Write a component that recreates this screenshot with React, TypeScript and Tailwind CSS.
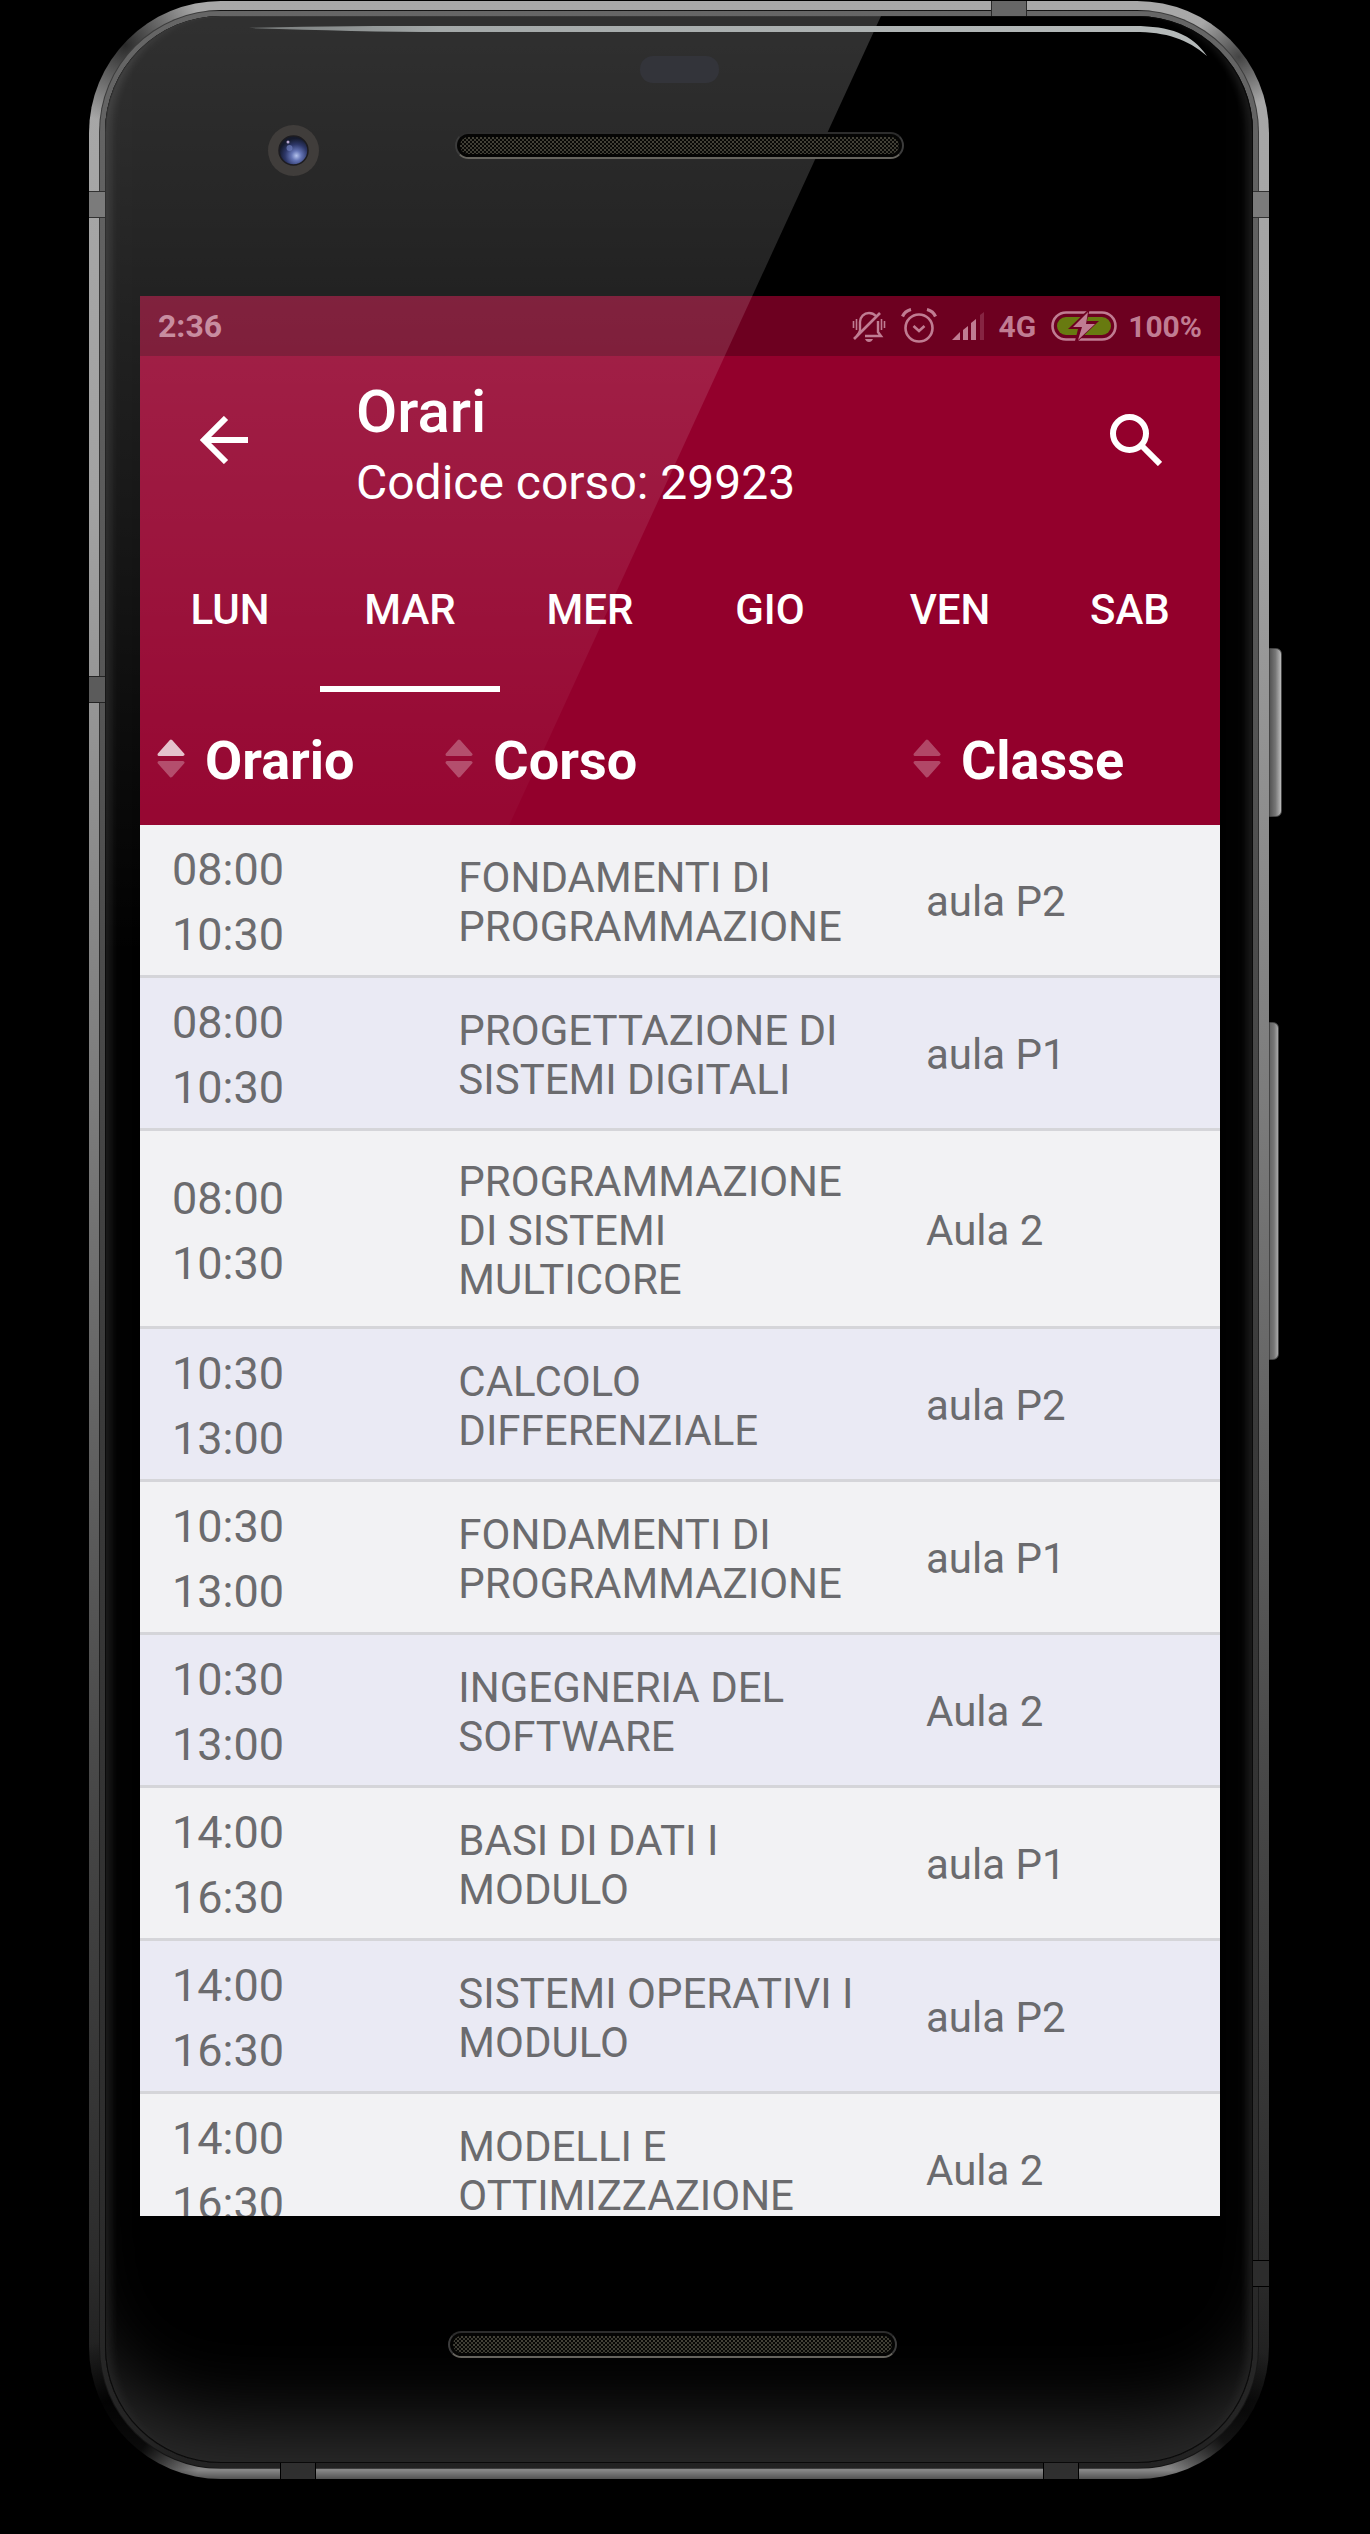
import React from "react";

const LESSONS = [
  { start: "08:00", end: "10:30", course: ["FONDAMENTI DI", "PROGRAMMAZIONE"], room: "aula P2" },
  { start: "08:00", end: "10:30", course: ["PROGETTAZIONE DI", "SISTEMI DIGITALI"], room: "aula P1" },
  { start: "08:00", end: "10:30", course: ["PROGRAMMAZIONE", "DI SISTEMI", "MULTICORE"], room: "Aula 2" },
  { start: "10:30", end: "13:00", course: ["CALCOLO", "DIFFERENZIALE"], room: "aula P2" },
  { start: "10:30", end: "13:00", course: ["FONDAMENTI DI", "PROGRAMMAZIONE"], room: "aula P1" },
  { start: "10:30", end: "13:00", course: ["INGEGNERIA DEL", "SOFTWARE"], room: "Aula 2" },
  { start: "14:00", end: "16:30", course: ["BASI DI DATI I", "MODULO"], room: "aula P1" },
  { start: "14:00", end: "16:30", course: ["SISTEMI OPERATIVI I", "MODULO"], room: "aula P2" },
  { start: "14:00", end: "16:30", course: ["MODELLI E", "OTTIMIZZAZIONE"], room: "Aula 2" },
];

const DAYS = ["LUN", "MAR", "MER", "GIO", "VEN", "SAB"];

function MutedBell() {
  return (
    <svg width="34" height="34" viewBox="0 0 34 34" fill="none" stroke="currentColor" strokeWidth="2.4">
      <path d="M8 23V13c0-5 4-9 9-9 3 0 5 1 7 3M26 12v11l3 4H13" />
      <path d="M8 22l-3 5" />
      <path d="M28 4 2 30" strokeWidth="2.6" />
      <path d="M13 30h8c-1 2-2 3-4 3s-3-1-4-3z" fill="currentColor" stroke="none" />
      <path d="M1.500 12v7M4.500 10v11M29.500 10v11M32.500 12v7" strokeWidth="1.600" />
    </svg>
  );
}

function AlarmClock() {
  return (
    <svg width="36" height="36" viewBox="0 0 36 36" fill="none" stroke="currentColor" strokeWidth="2.600">
      <circle cx="18" cy="20" r="13.500" />
      <path d="M12.500 18l5.500 5 5.500-5" />
      <path d="M1.500 8.500C3 5 6 2.500 10 1.500M34.500 8.500C33 5 30 2.500 26 1.500" strokeWidth="3.200" />
    </svg>
  );
}

function Signal() {
  return (
    <svg width="32" height="28" viewBox="0 0 32 28" fill="currentColor">
      <path d="M0 28l8-8v8zM11 18l5-4v14h-5zM19 11l5-4v21h-5z" />
      <path d="M28 3l4-3v28h-4z" opacity=".3" />
    </svg>
  );
}

function Battery() {
  return (
    <svg width="66" height="30" viewBox="0 0 66 30" fill="none">
      <rect x="1.500" y="1.500" width="63" height="27" rx="13.500" stroke="currentColor" strokeWidth="2.600" />
      <rect x="6" y="6" width="54" height="18" rx="9" fill="#687a10" />
      <path d="M39-3 17 18h10l-4 16 25-24H36z" fill="#6d0020" />
      <path d="M37 1 22 16h9l-4 13 17-16h-9z" fill="currentColor" />
    </svg>
  );
}

function SortIcon({ active }: { active?: boolean }) {
  return (
    <svg
      width="28"
      height="39"
      viewBox="0 0 28 39"
      fill="#fff"
      stroke="#fff"
      strokeWidth="3"
      strokeLinejoin="round"
      className="shrink-0"
    >
      <g opacity={active ? 0.75 : 0.28}>
        <path d="M14 2 26 15.500H2z" />
      </g>
      <g opacity=".28">
        <path d="M14 37 26 23.500H2z" />
      </g>
    </svg>
  );
}

function SpeakerGrille() {
  return (
    <div className="relative z-10 h-[27px] w-[449px] rounded-full border-2 border-x-[#3c3c3c] border-b-[#66645e] border-t-[#2c2c2c] bg-[#050504] p-[3px]">
      <svg width="100%" height="100%" className="rounded-full">
        <defs>
          <pattern id="mesh" width="4" height="4" patternUnits="userSpaceOnUse">
            <rect width="4" height="4" fill="#080806" />
            <rect x="0" y="0" width="2" height="2" fill="#444238" />
            <rect x="2" y="2" width="2" height="2" fill="#3d3c33" />
          </pattern>
        </defs>
        <rect width="100%" height="100%" fill="url(#mesh)" />
      </svg>
    </div>
  );
}

function Camera() {
  return (
    <svg width="51" height="51" viewBox="0 0 51 51">
      <defs>
        <radialGradient id="lens" cx=".6" cy=".68" r=".6">
          <stop offset="0" stopColor="#b4c2ec" />
          <stop offset=".28" stopColor="#6474b4" />
          <stop offset=".65" stopColor="#2d3768" />
          <stop offset="1" stopColor="#151a2c" />
        </radialGradient>
      </defs>
      <circle cx="25.500" cy="25.500" r="25.500" fill="#403d3b" />
      <circle cx="25.500" cy="25.500" r="14.500" fill="url(#lens)" stroke="#1d1c20" strokeWidth="1.500" />
      <circle cx="21.500" cy="23" r="3" fill="#6d7cba" opacity=".7" />
      <circle cx="20" cy="17" r="1.500" fill="#b9a7cf" />
    </svg>
  );
}

/* Light falling across the upper left of the glass. */
function GlassReflection() {
  return (
    <svg
      className="pointer-events-none absolute left-0 top-0 h-[940px] w-[800px]"
      viewBox="0 0 800 940"
      preserveAspectRatio="none"
      aria-hidden="true"
    >
      <defs>
        <linearGradient id="glare" x1="0" y1="0" x2="0" y2="1">
          <stop offset="0" stopColor="#fff" stopOpacity=".19" />
          <stop offset="1" stopColor="#fff" stopOpacity="0" />
        </linearGradient>
      </defs>
      <path d="M0 0h776L344 940H0z" fill="url(#glare)" />
    </svg>
  );
}

function EdgeHighlight() {
  return (
    <svg
      className="pointer-events-none absolute right-[62px] top-[24px] h-[34px] w-[958px]"
      viewBox="0 0 958 34"
      preserveAspectRatio="none"
      aria-hidden="true"
    >
      <defs>
        <linearGradient id="edge" x1="0" x2="1">
          <stop offset="0" stopColor="#777b7b" />
          <stop offset=".2" stopColor="#a3a8a8" />
          <stop offset="1" stopColor="#b5baba" />
        </linearGradient>
      </defs>
      <path d="M0 3C70 1 130 1 200 1h685c36 0 58 8 73 30-20-17-40-24-73-24H200C130 7 70 5 0 3z" fill="url(#edge)" />
    </svg>
  );
}

export default function App() {
  return (
    <main className="min-h-screen bg-black pb-[52px] pl-[89px] pr-[101px] pt-px font-[Roboto,sans-serif]">
      <div className="relative rounded-[132px] bg-[radial-gradient(circle_at_36px_44px,rgba(0,0,0,0.75),transparent_80px),radial-gradient(circle_at_calc(100%-30px)_56px,rgba(0,0,0,0.6),transparent_50px),radial-gradient(circle_at_30px_calc(100%-50px),rgba(0,0,0,0.9)_30px,transparent_90px),radial-gradient(circle_at_calc(100%-30px)_calc(100%-50px),rgba(0,0,0,0.8)_20px,transparent_80px),linear-gradient(180deg,#a8a8a8_0,#a2a2a2_500px,#7c7c7c_1100px,#4a4a4a_1750px,#2c2c2c_2260px,#1c1c1c_2400px,#888_2469px,#4c4c4c_2479px)] px-[10px] pb-[10px] pt-[9px]">
        <div className="rounded-[122px] border border-black/40 bg-[linear-gradient(180deg,#666_0,#555_700px,#3a3a3a_1400px,#2c2c2c_2200px,#222_2460px)] p-[5px]">
          <div className="relative overflow-hidden rounded-[116px] bg-black pl-[35px] pr-[33px] shadow-[inset_0_0_0_1px_#0a0a0a,inset_0_-90px_80px_-50px_#2c2c2c,inset_14px_0_8px_-8px_#1c1c1c,inset_-14px_0_8px_-8px_#1c1c1c]">
            <div className="relative flex h-[280px] justify-center pr-[2px] pt-[116px]">
              <SpeakerGrille />
              <div className="absolute left-[128px] top-[109px] z-10">
                <Camera />
              </div>
              <span className="absolute left-[500px] top-[40px] z-10 h-[27px] w-[79px] rounded-[13px] bg-[#33343a]" />
            </div>

            <div className="aspect-[9/16] overflow-hidden bg-[#f2f2f4]">
              <header className="bg-[#93002c] text-white">
                <div className="flex h-[60px] items-center justify-between bg-[#6d0020] px-[18px] font-bold text-[#c07c92]">
                  <span className="text-[32px]">2:36</span>
                  <div className="flex items-center gap-[15px] text-[30px]">
                    <MutedBell />
                    <AlarmClock />
                    <Signal />
                    <span>4G</span>
                    <Battery />
                    <span className="-ml-1">100%</span>
                  </div>
                </div>
                <div className="flex h-[168px] items-center pl-[60px] pr-[58px]">
                  <button aria-label="Indietro" className="w-[156px]">
                    <svg width="48" height="48" viewBox="0 0 48 48" fill="none" stroke="#fff" strokeWidth="6">
                      <path d="M48 24H5M26 2 4 24l22 22" />
                    </svg>
                  </button>
                  <div className="grow pt-[16px]">
                    <h1 className="text-[60px] font-medium leading-[70px]">Orari</h1>
                    <p className="text-[48px] leading-[72px]">Codice corso: 29923</p>
                  </div>
                  <button aria-label="Cerca">
                    <svg width="52" height="52" viewBox="0 0 52 52" fill="none" stroke="#fff" strokeWidth="6">
                      <circle cx="19.500" cy="19.500" r="16.500" />
                      <path d="M32 32l18 18" />
                    </svg>
                  </button>
                </div>
                <nav className="grid grid-cols-6 pt-[12px]">
                  {DAYS.map((day) => (
                    <button
                      key={day}
                      className={
                        day === "MAR"
                          ? "h-[156px] border-b-[6px] border-white pb-[4px] text-[42px] font-medium"
                          : "h-[156px] border-b-[6px] border-transparent pb-[4px] text-[42px] font-medium"
                      }
                    >
                      {day}
                    </button>
                  ))}
                </nav>
              </header>

              <table className="w-full table-fixed border-collapse text-left text-[#6b6b6e]">
                <colgroup>
                  <col className="w-[26.7%]" />
                  <col className="w-[43.3%]" />
                  <col className="w-[30%]" />
                </colgroup>
                <thead className="bg-[#93002c] text-white">
                  <tr className="h-[133px]">
                    {["Orario", "Corso", "Classe"].map((label, i) => (
                      <th key={label} className="p-0 pl-[17px]">
                        <button className="flex items-center gap-[20px] text-[54px] font-bold">
                          <SortIcon active={i === 0} />
                          <span className="pt-[4px]">{label}</span>
                        </button>
                      </th>
                    ))}
                  </tr>
                </thead>
                <tbody>
                  {LESSONS.map((l, i) => (
                    <tr key={i} className="border-b-[3px] border-[#d5d5d9] odd:bg-[#f2f2f4] even:bg-[#eaeaf4]">
                      <td className="pb-[8px] pl-[32px] pt-[12px] text-[45px] leading-[65px]">
                        <div>{l.start}</div>
                        <div>{l.end}</div>
                      </td>
                      <td className="pb-[22px] pl-[30px] pt-[26px] text-[42px] leading-[49px]">
                        {l.course.map((line) => (
                          <div key={line} className="whitespace-nowrap">
                            {line}
                          </div>
                        ))}
                      </td>
                      <td className="pl-[30px] pt-[3px] text-[42px]">{l.room}</td>
                    </tr>
                  ))}
                </tbody>
              </table>
            </div>

            <div className="flex h-[247px] justify-center pr-[16px] pt-[115px]">
              <SpeakerGrille />
            </div>
            <GlassReflection />
          </div>
        </div>
        <EdgeHighlight />

        {/* antenna bands */}
        <span className="absolute left-0 top-[190px] h-[27px] w-[16px] border-y border-black/60 bg-[#7b7b7b]" />
        <span className="absolute right-0 top-[190px] h-[27px] w-[16px] border-y border-black/60 bg-[#7b7b7b]" />
        <span className="absolute left-0 top-[675px] h-[27px] w-[16px] border-y border-black/60 bg-[#5b5b5b]" />
        <span className="absolute bottom-[192px] right-0 h-[27px] w-[16px] border-y border-black bg-[#2c2c2c]" />
        <span className="absolute right-[242px] top-0 h-[15px] w-[36px] border-x border-black/60 bg-[#666]" />
        <span className="absolute bottom-0 left-[191px] h-[16px] w-[36px] border-x border-black bg-[#2f2f2f]" />
        <span className="absolute bottom-0 right-[190px] h-[16px] w-[36px] border-x border-black bg-[#2f2f2f]" />
        {/* side keys */}
        <span className="absolute left-full top-[647px] h-[169px] w-[13px] rounded-r-md border border-[#444] bg-linear-to-r from-[#555] via-[#777] to-[#bbb]" />
        <span className="absolute left-full top-[1021px] h-[338px] w-[10px] rounded-r-md border border-[#444] bg-linear-to-r from-[#666] via-[#777] to-[#aaa]" />
      </div>
    </main>
  );
}
